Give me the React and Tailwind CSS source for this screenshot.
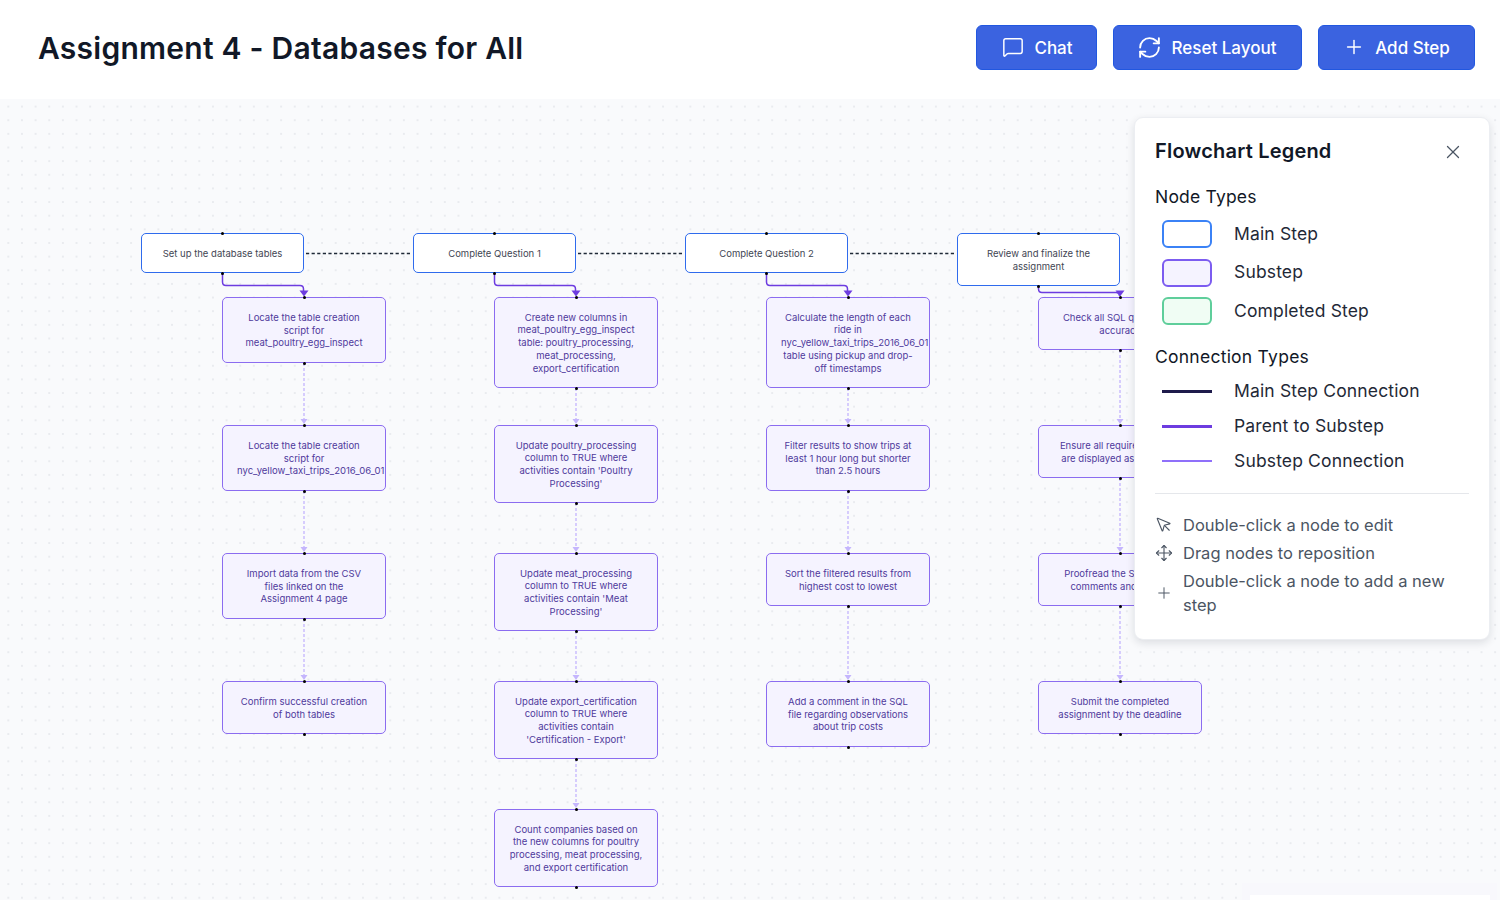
import { MessageSquare, RefreshCw, Plus, X, MousePointer, Move } from 'lucide-react'

const TOP = 99
const colX = [141, 413, 685, 957]
const mains = [
  { h: 40, text: 'Set up the database tables' },
  { h: 40, text: 'Complete Question 1' },
  { h: 40, text: 'Complete Question 2' },
  { h: 53, text: 'Review and finalize the assignment' },
]
const subRows = [297, 425, 553, 681, 809]
const subs = [
  [
    { h: 66, text: 'Locate the table creation script for meat_poultry_egg_inspect' },
    { h: 66, text: 'Locate the table creation script for nyc_yellow_taxi_trips_2016_06_01' },
    { h: 66, text: 'Import data from the CSV files linked on the Assignment 4 page' },
    { h: 53, text: 'Confirm successful creation of both tables' },
  ],
  [
    { h: 91, text: 'Create new columns in meat_poultry_egg_inspect table: poultry_processing, meat_processing, export_certification' },
    { h: 78, text: "Update poultry_processing column to TRUE where activities contain 'Poultry Processing'" },
    { h: 78, text: "Update meat_processing column to TRUE where activities contain 'Meat Processing'" },
    { h: 78, text: "Update export_certification column to TRUE where activities contain 'Certification - Export'" },
    { h: 78, text: 'Count companies based on the new columns for poultry processing, meat processing, and export certification' },
  ],
  [
    { h: 91, text: 'Calculate the length of each ride in nyc_yellow_taxi_trips_2016_06_01 table using pickup and drop-off timestamps' },
    { h: 66, text: 'Filter results to show trips at least 1 hour long but shorter than 2.5 hours' },
    { h: 53, text: 'Sort the filtered results from highest cost to lowest' },
    { h: 66, text: 'Add a comment in the SQL file regarding observations about trip costs' },
  ],
  [
    { h: 53, text: 'Check all SQL queries for accuracy' },
    { h: 53, text: 'Ensure all required outputs are displayed as expected' },
    { h: 53, text: 'Proofread the SQL query comments and results' },
    { h: 53, text: 'Submit the completed assignment by the deadline' },
  ],
]

function Handle({ x, y }) {
  return <span className="absolute w-[3px] h-[3px] rounded-full bg-black -ml-[1.5px] -mt-[1.5px]" style={{ left: x, top: y }} />
}

function Node({ x, y, w, h, text, sub }) {
  return (
    <>
      <div
        className={sub
          ? 'absolute flex items-center justify-center rounded-[5px] border-[1.5px] border-[#8b6cf0] bg-[#f5f3ff] px-[14px] pt-[2px] text-center text-[9.5px] leading-[12.7px] text-[#4f3a9c] overflow-hidden'
          : 'absolute flex items-center justify-center rounded-[5px] border-[1.5px] border-[#2f6bed] bg-white px-[14px] pt-[2px] text-center text-[9.5px] leading-[12.7px] text-[#3f4653] overflow-hidden'}
        style={{ left: x, top: y - TOP, width: w, height: h }}
      >
        <div className="w-full">{text}</div>
      </div>
      <Handle x={x + w / 2} y={y - TOP} />
      <Handle x={x + w / 2} y={y - TOP + h} />
    </>
  )
}

function Edges() {
  return (
    <svg className="absolute left-0 top-0" width="1500" height="801" viewBox={`0 ${TOP} 1500 801`} fill="none">
      {[0, 1, 2].map((i) => (
        <path key={i} d={`M${colX[i] + 165} 253.5H${colX[i + 1] - 2}`} stroke="#1f2937" strokeWidth="1.3" strokeDasharray="3.2 2.4" />
      ))}
      {colX.map((x, i) => {
        const bottom = 233 + mains[i].h
        const ex = x + 163
        return (
          <g key={x}>
            <path d={`M${x + 81.5} ${bottom}V${i === 3 ? 289 : 282}q0 3.5 3.5 3.5H${ex - 4}q3.5 0 3.5 3.5V292`} stroke="#6d3ce0" strokeWidth="1.5" />
            <path d={`M${ex - 4.5} 290.5H${ex + 4.5}L${ex} 296.5Z`} fill="#6d3ce0" />
            {subs[i].slice(0, -1).map((s, j) => {
              const y1 = subRows[j] + s.h
              const y2 = subRows[j + 1]
              return (
                <g key={j}>
                  <path d={`M${ex} ${y1}V${y2 - 4}`} stroke="#c4b5fd" strokeWidth="1.3" strokeDasharray="3 2" />
                  <path d={`M${ex - 3.5} ${y2 - 6}H${ex + 3.5}L${ex} ${y2 - 1}Z`} fill="#c4b5fd" />
                </g>
              )
            })}
          </g>
        )
      })}
    </svg>
  )
}

function Legend() {
  return (
    <div className="absolute left-[1134px] top-[18px] w-[356px] h-[523px] rounded-[9px] border border-[#eceef2] bg-white px-[20px] pt-[20px] shadow-[0_3px_8px_rgba(17,24,39,0.12)] text-[#111827]">
      <div className="flex items-center justify-between h-[27px] pr-[5px]">
        <h2 className="text-[20px] font-semibold leading-[27px] tracking-[0.2px] text-[#111827]">Flowchart Legend</h2>
        <X size={22} strokeWidth={1.4} className="text-[#4b5563]" />
      </div>
      <h3 className="mt-[20px] text-[17.5px] font-normal leading-[24px] tracking-[0.2px]">Node Types</h3>
      <div className="mt-[11px] flex flex-col gap-[10.5px] pl-[7px]">
        <div className="flex items-center gap-[22px] h-[28px]">
          <div className="w-[50px] h-[28px] rounded-[6px] border-2 border-[#3b82f6] bg-white" />
          <span className="text-[17.5px] tracking-[0.15px] text-[#1f2937]">Main Step</span>
        </div>
        <div className="flex items-center gap-[22px] h-[28px]">
          <div className="w-[50px] h-[28px] rounded-[6px] border-2 border-[#7c5cf0] bg-[#f5f3ff]" />
          <span className="text-[17.5px] tracking-[0.15px] text-[#1f2937]">Substep</span>
        </div>
        <div className="flex items-center gap-[22px] h-[28px]">
          <div className="w-[50px] h-[28px] rounded-[6px] border-2 border-[#5fce9b] bg-[#f0fdf4]" />
          <span className="text-[17.5px] tracking-[0.15px] text-[#1f2937]">Completed Step</span>
        </div>
      </div>
      <h3 className="mt-[20px] text-[17.5px] font-normal leading-[24px] tracking-[0.25px]">Connection Types</h3>
      <div className="mt-[10px] flex flex-col gap-[11px] pl-[7px]">
        <div className="flex items-center gap-[22px] h-[24px]">
          <div className="w-[50px] h-[3px] bg-[#1e1b4b]" />
          <span className="text-[17.5px] tracking-[0.15px] text-[#1f2937]">Main Step Connection</span>
        </div>
        <div className="flex items-center gap-[22px] h-[24px]">
          <div className="w-[50px] h-[3px] bg-[#6d3ce0]" />
          <span className="text-[17.5px] tracking-[0.15px] text-[#1f2937]">Parent to Substep</span>
        </div>
        <div className="flex items-center gap-[22px] h-[24px]">
          <div className="w-[50px] h-[2px] bg-[#8f70fa]" />
          <span className="text-[17.5px] tracking-[0.15px] text-[#1f2937]">Substep Connection</span>
        </div>
      </div>
      <div className="mt-[20px] border-t border-[#e5e7eb]" />
      <div className="mt-[19px] flex flex-col gap-[4px] text-[16.5px] leading-[24px] text-[#4b5563]">
        <div className="flex items-center gap-[10px]">
          <MousePointer size={18} strokeWidth={1.5} className="shrink-0" />
          <span>Double-click a node to edit</span>
        </div>
        <div className="flex items-center gap-[10px]">
          <Move size={18} strokeWidth={1.5} className="shrink-0" />
          <span>Drag nodes to reposition</span>
        </div>
        <div className="flex items-center gap-[10px]">
          <Plus size={18} strokeWidth={1.3} className="shrink-0" />
          <span>Double-click a node to add a new step</span>
        </div>
      </div>
    </div>
  )
}

function Button({ icon, label, width }) {
  return (
    <button className={`flex h-[45px] items-center justify-center gap-[10px] rounded-[6px] border border-[#2157e0] bg-[#3b63e0] text-[17px] font-medium text-white ${width}`}>
      {icon}
      <span className="pt-[3px]">{label}</span>
    </button>
  )
}

export default function App() {
  return (
    <div className="flex h-[900px] flex-col overflow-hidden bg-white font-['Inter',sans-serif]">
      <header className="flex h-[99px] items-center justify-between pl-[38px] pr-[25px] pb-[3px]">
        <h1 className="text-[30px] font-semibold tracking-[0.25px] text-[#111827]">Assignment 4 - Databases for All</h1>
        <div className="mb-[2px] flex gap-[16px]">
          <Button width="w-[121px] pl-[2px]" label="Chat" icon={<MessageSquare size={22} strokeWidth={1.6} />} />
          <Button width="w-[189px] pr-[2px]" label="Reset Layout" icon={<RefreshCw size={25} strokeWidth={1.8} />} />
          <Button width="w-[157px]" label="Add Step" icon={<Plus size={22} strokeWidth={1.6} />} />
        </div>
      </header>
      <main className="relative flex-1 overflow-hidden bg-[#f9fafc] bg-[radial-gradient(#e9ebef_0.8px,transparent_0.8px)] bg-[size:13.65px_13.65px] bg-[position:1.5px_0.75px]">
        <Edges />
        {colX.map((x, i) => (
          <Node key={x} x={x} y={233} w={163} h={mains[i].h} text={mains[i].text} />
        ))}
        {subs.map((col, i) =>
          col.map((s, j) => (
            <Node key={`${i}-${j}`} sub x={colX[i] + 81} y={subRows[j]} w={164} h={s.h} text={s.text} />
          ))
        )}
        <Legend />
        <div className="absolute left-[1242px] top-[784px] w-[255px] h-[20px] bg-[#f8f8fc]">
          <div className="ml-[8px] mt-[12px] w-[240px] h-[8px] bg-white" />
        </div>
      </main>
    </div>
  )
}
